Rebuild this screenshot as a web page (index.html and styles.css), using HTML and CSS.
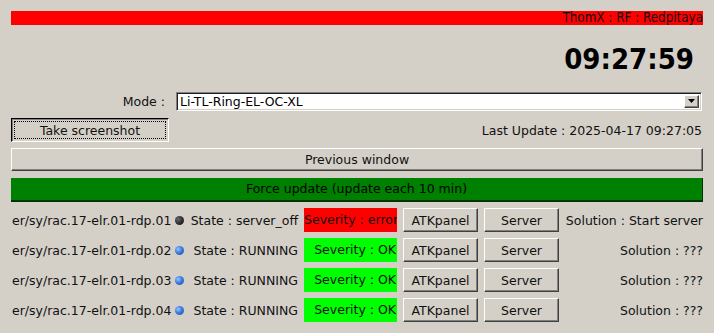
FILE: index.html
```html
<!DOCTYPE html>
<html>
<head>
<meta charset="utf-8">
<link rel="stylesheet" href="styles.css">
</head>
<body>
<div class="page">
  <div class="title">ThomX : RF : Redpitaya</div>
  <div class="clock">09:27:59</div>
  <div class="mode-row">
    <span class="mode-label">Mode :</span>
    <div class="combo">
      <span class="combo-text">Li-TL-Ring-EL-OC-XL</span>
      <span class="combo-arrow"><svg width="8" height="5" viewBox="0 0 8 5"><path d="M0 0H7L3.5 4Z" fill="#000"/></svg></span>
    </div>
  </div>
  <div class="shot-row">
    <button class="btn btn-pressed">Take screenshot</button>
    <span class="last-update">Last Update : 2025-04-17 09:27:05</span>
  </div>
  <button class="btn wide prev">Previous window</button>
  <div class="force">Force update (update each 10 min)</div>
  <div class="devices">
    <span class="name">er/sy/rac.17-elr.01-rdp.01</span>
    <span class="led led-off"></span>
    <span class="state">State : server_off</span>
    <span class="sev sev-error">Severity : error</span>
    <button class="btn">ATKpanel</button>
    <button class="btn">Server</button>
    <span class="solution">Solution : Start server</span>

    <span class="name">er/sy/rac.17-elr.01-rdp.02</span>
    <span class="led led-on"></span>
    <span class="state">State : RUNNING</span>
    <span class="sev sev-ok">Severity : OK</span>
    <button class="btn">ATKpanel</button>
    <button class="btn">Server</button>
    <span class="solution">Solution : ???</span>

    <span class="name">er/sy/rac.17-elr.01-rdp.03</span>
    <span class="led led-on"></span>
    <span class="state">State : RUNNING</span>
    <span class="sev sev-ok">Severity : OK</span>
    <button class="btn">ATKpanel</button>
    <button class="btn">Server</button>
    <span class="solution">Solution : ???</span>

    <span class="name">er/sy/rac.17-elr.01-rdp.04</span>
    <span class="led led-on"></span>
    <span class="state">State : RUNNING</span>
    <span class="sev sev-ok">Severity : OK</span>
    <button class="btn">ATKpanel</button>
    <button class="btn">Server</button>
    <span class="solution">Solution : ???</span>
  </div>
</div>
</body>
</html>
```

FILE: styles.css
```css
html, body {
  margin: 0;
  padding: 0;
  background: #d4d0c8;
}
body {
  font-family: "DejaVu Sans", sans-serif;
  font-size: 12.5px;
  color: #111;
}
.page {
  width: 714px;
  height: 333px;
  box-sizing: border-box;
  padding: 11px 11px 0 11px;
  display: flex;
  flex-direction: column;
  overflow: hidden;
}
.title {
  height: 14px;
  line-height: 14px;
  background: #ff0000;
  text-align: right;
  font-family: "DejaVu Sans Condensed", "DejaVu Sans", sans-serif;
  font-stretch: condensed;
  font-size: 13.3px;
  color: #111;
}
.clock {
  margin-top: 17px;
  height: 34px;
  line-height: 34px;
  text-align: right;
  padding-right: 9px;
  font-family: "DejaVu Sans Condensed", "DejaVu Sans", sans-serif;
  font-stretch: condensed;
  font-weight: bold;
  font-size: 29px;
  color: #000;
}
.mode-row {
  margin-top: 16px;
  height: 19px;
  display: grid;
  grid-template-columns: 165px 1fr;
  padding-right: 1px;
  align-items: center;
}
.mode-label {
  text-align: right;
  padding-right: 11px;
}
.combo {
  height: 19px;
  box-sizing: border-box;
  background: #fff;
  border-style: solid;
  border-width: 1px;
  border-color: #808080 #fff #fff #808080;
  box-shadow: inset 1px 1px #202020, inset -1px -1px #d4d0c8;
  display: flex;
  align-items: center;
  padding: 0 2px 0 3px;
}
.combo-text {
  flex: 1;
  color: #000;
}
.combo-arrow {
  width: 15px;
  height: 13px;
  box-sizing: border-box;
  background: #d4d0c8;
  border-style: solid;
  border-width: 1px;
  border-color: #fff #404040 #404040 #fff;
  box-shadow: inset -1px -1px #808080;
  display: flex;
  align-items: center;
  justify-content: center;
}
.shot-row {
  margin-top: 7px;
  height: 24px;
  display: flex;
  justify-content: space-between;
  align-items: center;
}
.last-update {
  padding-right: 1px;
}
.btn {
  font-family: "DejaVu Sans", sans-serif;
  font-size: 12.5px;
  color: #111;
  background: #d4d0c8;
  margin: 0;
  padding: 0;
  box-sizing: border-box;
  border-style: solid;
  border-width: 1px;
  border-color: #fff #404040 #404040 #fff;
  box-shadow: inset -1px -1px #808080;
  cursor: default;
}
.btn-pressed {
  width: 158px;
  height: 24px;
  padding-top: 1px;
  border-color: #000 #fff #fff #000;
  box-shadow: inset 1px 1px #808080;
  outline: 1px dotted #000;
  outline-offset: -4px;
}
.prev {
  margin-top: 6px;
  height: 23px;
  width: 100%;
}
.force {
  margin-top: 7px;
  height: 24px;
  box-sizing: border-box;
  background: #008000;
  border-bottom: 2px solid #003300;
  border-right: 1px solid #003300;
  text-align: center;
  line-height: 22px;
  color: #000;
}
.devices {
  margin-top: 6px;
  display: grid;
  grid-template-columns: 160px 16px 111px 99px 81px 81px 1fr;
  grid-auto-rows: 24px;
  row-gap: 6px;
  align-items: center;
}
.name {
  padding-left: 1px;
  white-space: nowrap;
}
.led {
  width: 9px;
  height: 9px;
  border-radius: 50%;
  justify-self: center;
}
.led-off {
  background: radial-gradient(circle at 35% 35%, #6a6a6a 0%, #2a2a2a 55%, #111 100%);
}
.led-on {
  background: radial-gradient(circle at 35% 35%, #9cc4ff 0%, #3b7be0 45%, #1d4c9c 100%);
}
.state {
  text-align: right;
  white-space: nowrap;
}
.sev {
  margin-left: 6px;
  height: 24px;
  line-height: 24px;
  text-align: right;
  padding-right: 1px;
  white-space: nowrap;
  overflow: hidden;
  color: #111;
}
.sev-error {
  background: #ff0000;
}
.sev-ok {
  background: #00ff00;
}
.devices .btn {
  margin-left: 6px;
  height: 24px;
}
.solution {
  text-align: right;
  white-space: nowrap;
}
```
